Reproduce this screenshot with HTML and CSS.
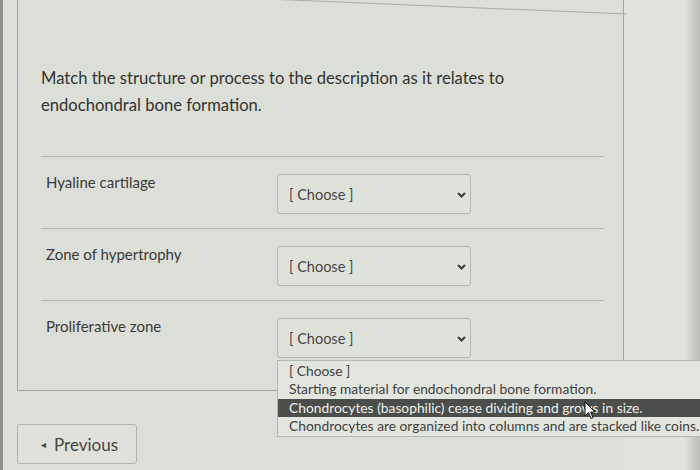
FILE: index.html
```html
<!DOCTYPE html>
<html lang="en">
<head>
    <meta charset="UTF-8">
    <meta name="viewport" content="width=device-width, initial-scale=1.0">
    <title>Matching Question</title>
    <link rel="stylesheet" href="styles.css">
</head>
<body>
    <div class="screen">
        <div class="main">
            <div class="card">
                <p class="question">Match the structure or process to the description as it relates to endochondral bone formation.</p>

                <div class="match-row">
                    <div class="match-label">Hyaline cartilage</div>
                    <div class="select-wrap">
                        <div class="select">
                            <span>[ Choose ]</span>
                            <svg class="chevron" width="9" height="6" viewBox="0 0 9 6"><polyline points="1,1 4.5,4.5 8,1" fill="none" stroke="#3c3c3c" stroke-width="2"/></svg>
                        </div>
                    </div>
                </div>

                <div class="match-row">
                    <div class="match-label">Zone of hypertrophy</div>
                    <div class="select-wrap">
                        <div class="select">
                            <span>[ Choose ]</span>
                            <svg class="chevron" width="9" height="6" viewBox="0 0 9 6"><polyline points="1,1 4.5,4.5 8,1" fill="none" stroke="#3c3c3c" stroke-width="2"/></svg>
                        </div>
                    </div>
                </div>

                <div class="match-row last">
                    <div class="match-label">Proliferative zone</div>
                    <div class="select-wrap">
                        <div class="select">
                            <span>[ Choose ]</span>
                            <svg class="chevron" width="9" height="6" viewBox="0 0 9 6"><polyline points="1,1 4.5,4.5 8,1" fill="none" stroke="#3c3c3c" stroke-width="2"/></svg>
                        </div>
                        <ul class="options">
                            <li>[ Choose ]</li>
                            <li>Starting material for endochondral bone formation.</li>
                            <li class="active">Chondrocytes (basophilic) cease dividing and grows in size.</li>
                            <li>Chondrocytes are organized into columns and are stacked like coins.</li>
                        </ul>
                        <svg class="cursor" width="12" height="19" viewBox="0 0 12 19"><path d="M1 1 L1 15 L4.5 11.5 L7 17.5 L9 16.6 L6.6 11 L11 11 Z" fill="#fff" stroke="#111" stroke-width="1"/></svg>
                    </div>
                </div>
            </div>

            <button class="prev"><span class="tri">&#9666;</span> Previous</button>
        </div>
        <div class="side"></div>
    </div>
</body>
</html>
```

FILE: styles.css
```css
body {
    margin: 0;
    font-family: Lato, "Open Sans", sans-serif;
    background-color: #dcdfd7;
    color: #3a3a3a;
}
.screen {
    display: flex;
    height: 470px;
    overflow: hidden;
    border-left: 3px solid #8e9189;
    box-sizing: border-box;
}
.main {
    width: 621px;
    padding-left: 14px;
    box-sizing: border-box;
    flex-shrink: 0;
}
.card {
    position: relative;
    border: 1px solid #a3a69e;
    border-top: none;
    padding: 65px 19px 18px 23px;
    background-color: #dcdfd7;
}
.card::before {
    content: "";
    position: absolute;
    left: 190px;
    top: -4px;
    width: 419px;
    height: 1px;
    background-color: #a8aba3;
    transform: rotate(2.4deg);
    transform-origin: left center;
}
.question {
    margin: 0 0 37px 0;
    max-width: 490px;
    font-size: 16.6px;
    line-height: 27px;
    color: #333;
}
.match-row {
    display: grid;
    grid-template-columns: 236px 194px;
    align-items: start;
    border-top: 1px solid #b5b8b0;
    padding: 17px 0 14px 0;
}
.match-label {
    font-size: 15px;
    line-height: 17px;
    padding-left: 5px;
    color: #3a3a3a;
}
.select-wrap {
    position: relative;
}
.select {
    display: flex;
    align-items: center;
    justify-content: space-between;
    height: 40px;
    padding: 0 4px 0 11px;
    border: 1px solid #b7bab2;
    border-radius: 3px;
    background-color: #dfe2da;
    box-sizing: border-box;
    font-size: 14.5px;
    color: #444;
}
.chevron {
    margin-top: 2px;
}
.options {
    position: absolute;
    z-index: 5;
    top: 42px;
    left: 0;
    width: 440px;
    margin: 0;
    padding: 1px 0 1px 0;
    list-style: none;
    background-color: #e3e5df;
    border: 1px solid #b5b8b0;
    font-size: 13.8px;
    line-height: 18.3px;
    color: #3f3f3f;
}
.options li {
    padding-left: 11px;
    white-space: nowrap;
}
.options li.active {
    background-color: #4b4e4a;
    color: #eceeea;
}
.cursor {
    position: absolute;
    z-index: 6;
    left: 307px;
    top: 83px;
}
.prev {
    display: flex;
    align-items: center;
    margin-top: 33px;
    width: 120px;
    height: 40px;
    padding: 0 0 0 23px;
    border: 1px solid #b3b6ae;
    border-radius: 3px;
    background-color: #dfe1da;
    font-family: Lato, "Open Sans", sans-serif;
    font-size: 17px;
    color: #454545;
}
.prev .tri {
    font-size: 10px;
    margin-right: 8px;
}
.side {
    flex: 1;
    background: linear-gradient(to right, #e0e2dc 0%, #e0e2dc 80%, #b9bbb5 100%);
}
```
